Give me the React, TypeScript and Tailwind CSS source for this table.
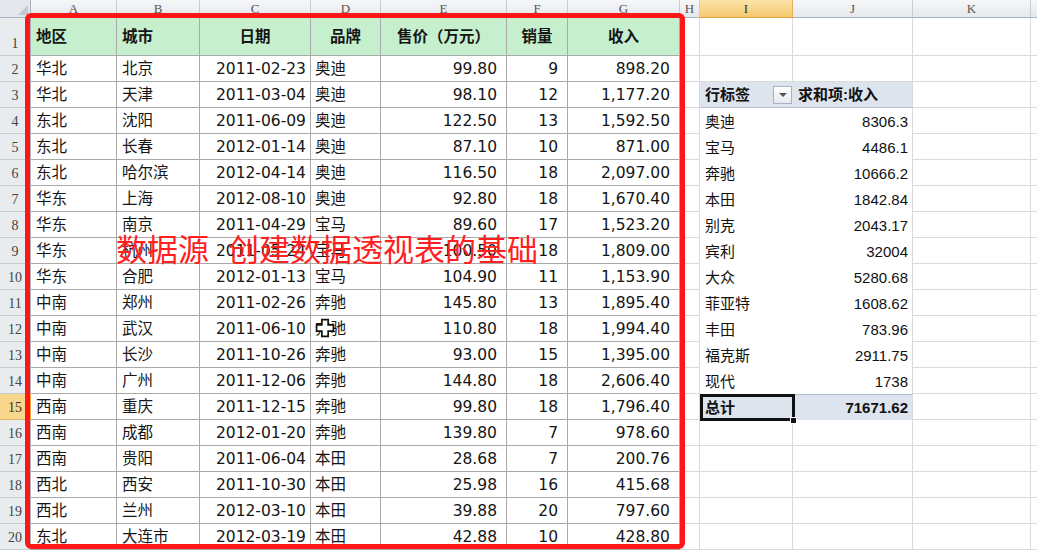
import React from "react";

// 数据源（A1:G20）
const rows: [string, string, string, string, string, string, string][] = [
  ["华北", "北京", "2011-02-23", "奥迪", "99.80", "9", "898.20"],
  ["华北", "天津", "2011-03-04", "奥迪", "98.10", "12", "1,177.20"],
  ["东北", "沈阳", "2011-06-09", "奥迪", "122.50", "13", "1,592.50"],
  ["东北", "长春", "2012-01-14", "奥迪", "87.10", "10", "871.00"],
  ["东北", "哈尔滨", "2012-04-14", "奥迪", "116.50", "18", "2,097.00"],
  ["华东", "上海", "2012-08-10", "奥迪", "92.80", "18", "1,670.40"],
  ["华东", "南京", "2011-04-29", "宝马", "89.60", "17", "1,523.20"],
  ["华东", "杭州", "2011-05-24", "宝马", "100.50", "18", "1,809.00"],
  ["华东", "合肥", "2012-01-13", "宝马", "104.90", "11", "1,153.90"],
  ["中南", "郑州", "2011-02-26", "奔驰", "145.80", "13", "1,895.40"],
  ["中南", "武汉", "2011-06-10", "奔驰", "110.80", "18", "1,994.40"],
  ["中南", "长沙", "2011-10-26", "奔驰", "93.00", "15", "1,395.00"],
  ["中南", "广州", "2011-12-06", "奔驰", "144.80", "18", "2,606.40"],
  ["西南", "重庆", "2011-12-15", "奔驰", "99.80", "18", "1,796.40"],
  ["西南", "成都", "2012-01-20", "奔驰", "139.80", "7", "978.60"],
  ["西南", "贵阳", "2011-06-04", "本田", "28.68", "7", "200.76"],
  ["西北", "西安", "2011-10-30", "本田", "25.98", "16", "415.68"],
  ["西北", "兰州", "2012-03-10", "本田", "39.88", "20", "797.60"],
  ["东北", "大连市", "2012-03-19", "本田", "42.88", "10", "428.80"],
];

// 透视表 I4:J14
const pivot: [string, string][] = [
  ["奥迪", "8306.3"],
  ["宝马", "4486.1"],
  ["奔驰", "10666.2"],
  ["本田", "1842.84"],
  ["别克", "2043.17"],
  ["宾利", "32004"],
  ["大众", "5280.68"],
  ["菲亚特", "1608.62"],
  ["丰田", "783.96"],
  ["福克斯", "2911.75"],
  ["现代", "1738"],
];

const tableCols = [
  { w: "w-[86px]", align: "justify-start pl-[5px]" },
  { w: "w-[83px]", align: "justify-start pl-[5px]" },
  { w: "w-[111px]", align: "justify-end pr-[4px]" },
  { w: "w-[70px]", align: "justify-start pl-[4px]" },
  { w: "w-[126px]", align: "justify-end pr-[9px]" },
  { w: "w-[61px]", align: "justify-end pr-[9px]" },
  { w: "w-[112px]", align: "justify-end pr-[9px]" },
];
const headers = ["地区", "城市", "日期", "品牌", "售价（万元）", "销量", "收入"];
const headerAlign = [
  "justify-start pl-[5px]",
  "justify-start pl-[5px]",
  "justify-center",
  "justify-center",
  "justify-center",
  "justify-center",
  "justify-center",
];

const letters = [
  { l: "A", w: "w-[86px]" },
  { l: "B", w: "w-[83px]" },
  { l: "C", w: "w-[111px]" },
  { l: "D", w: "w-[70px]" },
  { l: "E", w: "w-[126px]" },
  { l: "F", w: "w-[61px]" },
  { l: "G", w: "w-[112px]" },
  { l: "H", w: "w-[20px]" },
  { l: "I", w: "w-[93px]" },
  { l: "J", w: "w-[120px]" },
  { l: "K", w: "w-[118px]" },
];

const dataFont = "font-['DejaVu_Sans','Noto_Sans_CJK_SC',sans-serif]";
const pivotFont = "font-['Liberation_Sans','Noto_Sans_CJK_SC',sans-serif]";

function RowNum({ n }: { n: number }) {
  const sel = n === 15;
  return (
    <div
      className={`w-[31px] shrink-0 flex justify-center border-r border-b text-[14px] font-['Liberation_Serif',serif] ${
        n === 1 ? "items-end pb-[1px]" : "items-center pt-[1px]"
      } ${
        sel
          ? "bg-[#f8d68c] border-r-[#e9a63a] border-b-[#e2b968] text-[#333]"
          : "bg-[#e9ecef] border-r-[#a8b3c0] border-b-[#c8cdd3] text-[#444]"
      }`}
    >
      {n}
    </div>
  );
}

function Blank({ w }: { w: string }) {
  return <div className={`${w} shrink-0 border-r border-b border-[#d9dadc]`} />;
}

function PivotCells({ r }: { r: number }) {
  if (r === 3) {
    return (
      <>
        <div className={`w-[93px] shrink-0 flex items-center justify-between pl-[5px] pr-[1px] bg-[#dde4ee] border-b border-b-[#aebfd6] ${pivotFont} font-bold text-[15px] text-[#111]`}>
          <span className="pt-[2px]">行标签</span>
          <span className="w-[19px] h-[18px] border border-[#a7b3c2] bg-gradient-to-b from-white to-[#e6eaf0] flex items-center justify-center">
            <span className="w-0 h-0 border-l-[4px] border-r-[4px] border-t-[4px] border-l-transparent border-r-transparent border-t-[#555]" />
          </span>
        </div>
        <div className={`w-[120px] shrink-0 flex items-center pl-[5px] pt-[2px] bg-[#dde4ee] border-b border-b-[#aebfd6] border-r border-r-[#d9dadc] ${pivotFont} font-bold text-[15px] text-[#111]`}>
          求和项:收入
        </div>
      </>
    );
  }
  if (r >= 4 && r <= 14) {
    const [label, val] = pivot[r - 4];
    return (
      <>
        <div className={`w-[93px] shrink-0 flex items-center pl-[5px] pt-[2px] bg-white ${pivotFont} text-[15px] text-[#111]`}>
          {label}
        </div>
        <div className={`w-[120px] shrink-0 flex items-center justify-end pr-[4px] pt-[2px] bg-white border-r border-r-[#d9dadc] ${pivotFont} text-[15px] text-[#111]`}>
          {val}
        </div>
      </>
    );
  }
  if (r === 15) {
    return (
      <>
        <div className={`relative w-[93px] shrink-0 flex items-center pl-[5px] pt-[2px] bg-[#dde4ee] border-t border-t-[#aebfd6] ${pivotFont} font-bold text-[15px] text-[#111]`}>
          总计
          <div className="absolute left-[0px] top-[-1px] w-[95px] h-[27px] border-[3px] border-[#111]" />
          <div className="absolute left-[90px] top-[22px] w-[7px] h-[7px] bg-[#111] border border-white" />
        </div>
        <div className={`w-[120px] shrink-0 flex items-center justify-end pr-[4px] pt-[2px] bg-[#dde4ee] border-t border-t-[#aebfd6] border-r border-r-[#d9dadc] ${pivotFont} font-bold text-[15px] text-[#111]`}>
          71671.62
        </div>
      </>
    );
  }
  return (
    <>
      <Blank w="w-[93px]" />
      <Blank w="w-[120px]" />
    </>
  );
}

function SheetRow({ r }: { r: number }) {
  const h = r === 1 ? "h-[38px]" : "h-[26px]";
  return (
    <div className={`flex ${h}`}>
      <RowNum n={r} />
      {tableCols.map((c, i) => {
        const text = r === 1 ? headers[i] : rows[r - 2][i];
        return (
          <div
            key={i}
            className={`${c.w} shrink-0 flex border-r border-b border-[#a9a9a9] ${dataFont} text-[#151515] whitespace-nowrap overflow-hidden ${
              r === 1
                ? `bg-[#c6efce] items-center pt-[3px] font-bold text-[15.5px] ${headerAlign[i]}`
                : `items-center pt-[3px] text-[15.5px] ${c.align}`
            }`}
          >
            {text}
          </div>
        );
      })}
      <Blank w="w-[20px]" />
      <PivotCells r={r} />
      <Blank w="w-[118px]" />
      <div className="flex-1 border-b border-[#d9dadc]" />
    </div>
  );
}

function FatCross() {
  return (
    <svg width="20" height="20" viewBox="0 0 19 19" className="absolute left-[315px] top-[318px]">
      <path
        d="M6.5 1.5 H12.5 V6.5 H17.5 V12.5 H12.5 V17.5 H6.5 V12.5 H1.5 V6.5 H6.5 Z"
        fill="#fff"
        stroke="#111"
        strokeWidth="1.6"
      />
    </svg>
  );
}

export default function App() {
  return (
    <div className="relative w-[1037px] h-[551px] overflow-hidden bg-white select-none">
      {/* 列标 */}
      <div className="flex h-[18px]">
        <div className="relative w-[31px] shrink-0 bg-[#e4e7eb] border-r border-b border-[#a8b3c0]">
          <svg width="10" height="10" className="absolute right-[2px] bottom-[2px]">
            <polygon points="10,0 10,10 0,10" fill="#c3c9d0" />
          </svg>
        </div>
        {letters.map((c) => (
          <div
            key={c.l}
            className={`${c.w} shrink-0 flex items-center justify-center border-r border-b text-[13px] font-['Liberation_Serif',serif] ${
              c.l === "I"
                ? "bg-gradient-to-b from-[#fbe3a8] to-[#f6c96e] border-r-[#e2b25c] border-b-[#e5a33a] text-[#333]"
                : "bg-gradient-to-b from-[#f6f7f9] to-[#e5e8ec] border-r-[#c6ccd3] border-b-[#a8b3c0] text-[#555]"
            }`}
          >
            {c.l}
          </div>
        ))}
        <div className="flex-1 bg-gradient-to-b from-[#f6f7f9] to-[#e5e8ec] border-b border-[#a8b3c0]" />
      </div>

      {Array.from({ length: 20 }, (_, i) => (
        <SheetRow key={i} r={i + 1} />
      ))}

      {/* 红色标注框 */}
      <div className="absolute left-[25px] top-[13px] w-[660px] h-[536px] border-[5px] border-[#ff1717] rounded-[6px] pointer-events-none" />

      <div className="absolute left-[116px] top-[228px] text-[31px] leading-[40px] text-[#ff1f1f] font-['Noto_Sans_CJK_SC',sans-serif] whitespace-nowrap [word-spacing:12px]">
        数据源 创建数据透视表的基础
      </div>

      <FatCross />
    </div>
  );
}
